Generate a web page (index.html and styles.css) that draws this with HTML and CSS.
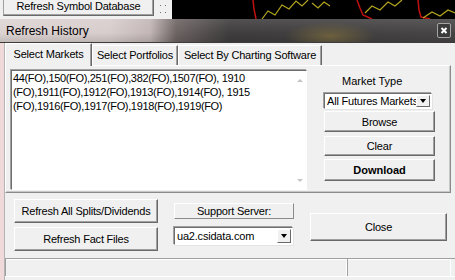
FILE: index.html
```html
<!DOCTYPE html>
<html>
<head>
	<title>Refresh History</title>
	<link rel="stylesheet" href="styles.css">
</head>
<body>
	<div class="top">
		<div class="toolbar">
			<div class="btn sym">Refresh Symbol Database</div>
			<svg class="grip" width="10" height="12" viewBox="0 0 10 12">
				<rect x="1" y="4" width="1" height="1" fill="#6d6d6d"/>
				<rect x="6" y="4" width="1" height="1" fill="#6d6d6d"/>
				<rect x="1" y="11" width="1" height="1" fill="#6d6d6d"/>
				<rect x="6" y="11" width="1" height="1" fill="#6d6d6d"/>
			</svg>
		</div>
		<svg class="chart" width="283" height="19" viewBox="0 0 283 19">
			<rect width="283" height="19" fill="#000"/>
			<polyline points="90,19 96,11 103,15 110,5 117,9 124,1 130,6 136,0" fill="none" stroke="#b3a61e" stroke-width="1.2"/>
			<polyline points="140,3 146,8 152,2 158,6" fill="none" stroke="#b3a61e" stroke-width="1.2"/>
			<polyline points="81,0 82,9 84,19" fill="none" stroke="#c01010" stroke-width="1.5"/>
			<polyline points="185,0 188,8 191,15 200,19" fill="none" stroke="#c01010" stroke-width="1.5"/>
			<polyline points="193,13 200,6 208,10 216,2 223,6 230,0" fill="none" stroke="#b3a61e" stroke-width="1.2"/>
			<polyline points="246,0 247,10 249,17 258,19" fill="none" stroke="#c01010" stroke-width="1.5"/>
			<polyline points="251,18 260,12 268,16 276,10 283,13" fill="none" stroke="#b3a61e" stroke-width="1.2"/>
		</svg>
	</div>
	<div class="win">
		<div class="title">
			<span>Refresh History</span>
			<svg class="x" width="14" height="15" viewBox="0 0 14 15">
				<rect x="0.5" y="0.5" width="13" height="14" rx="1.5" fill="#3b3b3b" stroke="#a5a5a5"/>
				<path d="M4.5 5 L9.5 10 M9.5 5 L4.5 10" stroke="#fff" stroke-width="2"/>
			</svg>
		</div>
		<div class="body">
			<ul class="tabs">
				<li class="on">Select Markets</li>
				<li class="t2">Select Portfolios</li>
				<li class="t3">Select By Charting Software</li>
			</ul>
			<div class="panel">
				<div class="list">
					<div class="txt">44(FO),150(FO),251(FO),382(FO),1507(FO), 1910
(FO),1911(FO),1912(FO),1913(FO),1914(FO), 1915
(FO),1916(FO),1917(FO),1918(FO),1919(FO)</div>
					<div class="sb">
						<i class="up"></i>
						<i class="dn"></i>
					</div>
				</div>
				<div class="side">
					<div class="lbl">Market Type</div>
					<div class="combo mt"><span>All Futures Markets</span><i class="arr"></i></div>
					<div class="btn browse">Browse</div>
					<div class="btn clear">Clear</div>
					<div class="btn dl">Download</div>
				</div>
			</div>
			<div class="bottom">
				<div class="col1">
					<div class="btn big">Refresh All Splits/Dividends</div>
					<div class="btn big">Refresh Fact Files</div>
				</div>
				<div class="col2">
					<div class="btn srv">Support Server:</div>
					<div class="combo ua"><span>ua2.csidata.com</span><i class="arr"></i></div>
				</div>
				<div class="btn close">Close</div>
			</div>
			<div class="status">
				<div class="s1"></div>
				<div class="s2"></div>
			</div>
		</div>
	</div>
</body>
</html>
```

FILE: styles.css
```css
*{
	padding: 0;
	margin: 0;
	box-sizing: border-box;
}
li{
	list-style: none;
}
body{
	width: 455px;
	height: 280px;
	overflow: hidden;
	background: #fff;
	font-family: "Liberation Sans", Arial, sans-serif;
	font-size: 11px;
	letter-spacing: -0.2px;
	color: #000;
}
.top{
	display: flex;
	height: 19px;
}
.toolbar{
	width: 172px;
	display: flex;
	align-items: flex-start;
	padding-left: 3px;
	background: #f0f0f0;
}
.btn{
	display: flex;
	align-items: center;
	justify-content: center;
	background: #f0f0f0;
	border: 1px solid;
	border-color: #fff #696969 #696969 #fff;
	box-shadow: inset -1px -1px 0 #a0a0a0;
	white-space: nowrap;
}
.sym{
	width: 151px;
	height: 16px;
	border-top: none;
	line-height: 12px;
	padding-bottom: 3px;
	border-left-color: #a0a0a0;
}
.grip{
	margin-left: 5px;
	margin-top: 1px;
}
.chart{
	display: block;
}
.title{
	height: 24px;
	display: flex;
	align-items: center;
	justify-content: space-between;
	padding: 0 4px 1px 6px;
	font-size: 12px;
	letter-spacing: 0;
	background:
		radial-gradient(ellipse 45px 14px at 330px 17px, rgba(160,135,60,0.45), rgba(160,135,60,0)),
		linear-gradient(to bottom, rgba(255,255,255,0.10), rgba(255,255,255,0) 60%, rgba(0,0,0,0.12)),
		linear-gradient(to right, #ddd3d3 0, #d8cdcd 110px, #c2b6b6 150px, #6e6464 176px, #3f3d3d 230px, #474545 100%);
	border-bottom: 1px solid #3c3c3c;
}
.title span{
	padding-top: 1px;
}
.x{
	display: block;
}
.body{
	height: 237px;
	background: #f0f0f0;
	border-left: 4px solid #efd9d9;
	box-shadow: inset 1px 0 0 #b4b4b4;
	display: flex;
	flex-direction: column;
}
.tabs{
	display: flex;
	align-items: flex-end;
	height: 22px;
	padding-left: 1px;
}
.tabs li{
	height: 20px;
	line-height: 19px;
	text-align: center;
	border: 1px solid;
	border-color: #fff #696969 transparent #fff;
	border-bottom: none;
	box-shadow: inset -1px 0 0 #a0a0a0;
}
.tabs .on{
	width: 87px;
	height: 23px;
	line-height: 20px;
	margin-bottom: -1px;
	position: relative;
	z-index: 1;
	background: #f0f0f0;
}
.tabs .t2{
	width: 86px;
}
.tabs .t3{
	width: 144px;
}
.panel{
	margin-left: 1px;
	width: 446px;
	height: 128px;
	display: flex;
	align-items: flex-start;
	padding: 4px 0 0 5px;
	border: 1px solid;
	border-color: #fff #8a8a8a #8a8a8a #fff;
	box-shadow: inset -1px -1px 0 #c8c8c8;
}
.list{
	width: 296px;
	height: 120px;
	display: flex;
	background: #fff;
	border: 1px solid;
	border-color: #6e6e6e #fff #fff #6e6e6e;
	box-shadow: -1px -1px 0 #a0a0a0;
}
.txt{
	flex: 1;
	white-space: pre;
	overflow: hidden;
	padding-left: 1px;
	line-height: 14px;
	letter-spacing: -0.35px;
}
.sb{
	width: 13px;
	display: flex;
	flex-direction: column;
	justify-content: space-between;
	align-items: center;
	padding: 8px 0 7px;
}
.sb i{
	width: 0;
	height: 0;
	border-left: 3px solid transparent;
	border-right: 3px solid transparent;
}
.sb .up{
	border-bottom: 3px solid #c4c4c4;
}
.sb .dn{
	border-top: 3px solid #c4c4c4;
}
.side{
	margin-left: 17px;
	width: 111px;
	display: flex;
	flex-direction: column;
	padding-top: 5px;
}
.lbl{
	height: 13px;
	line-height: 13px;
	padding-left: 18px;
	letter-spacing: 0;
}
.combo{
	display: flex;
	align-items: center;
	background: #fff;
	border: 1px solid;
	border-color: #6e6e6e #fff #fff #6e6e6e;
	box-shadow: -1px -1px 0 #a0a0a0, 1px 1px 0 #e3e3e3;
	padding: 1px;
}
.combo span{
	flex: 1;
	overflow: hidden;
	white-space: nowrap;
	padding-left: 1px;
}
.arr{
	width: 14px;
	align-self: stretch;
	display: flex;
	align-items: center;
	justify-content: center;
	background: #f0f0f0;
	border: 1px solid;
	border-color: #fff #696969 #696969 #fff;
}
.arr:after{
	content: "";
	border-left: 3.5px solid transparent;
	border-right: 3.5px solid transparent;
	border-top: 4px solid #000;
}
.mt{
	margin-top: 5px;
	width: 108px;
	height: 16px;
}
.browse{
	margin-top: 2px;
	height: 21px;
}
.clear{
	margin-top: 4px;
	height: 20px;
}
.dl{
	margin-top: 3px;
	height: 22px;
	font-weight: bold;
	letter-spacing: 0;
}
.bottom{
	height: 65px;
	display: flex;
	align-items: flex-start;
	padding-left: 10px;
}
.col1{
	width: 144px;
	padding-top: 6px;
	display: flex;
	flex-direction: column;
	gap: 4px;
}
.big{
	height: 24px;
}
.col2{
	width: 120px;
	margin-left: 16px;
	padding-top: 10px;
	display: flex;
	flex-direction: column;
	gap: 8px;
}
.srv{
	height: 16px;
	border-color: #fff #8a8a8a #8a8a8a #fff;
	box-shadow: none;
}
.ua{
	width: 119px;
	height: 18px;
}
.close{
	margin-left: 16px;
	margin-top: 20px;
	width: 137px;
	height: 28px;
}
.status{
	display: flex;
	height: 19px;
	margin-left: 1px;
	border-top: 1px solid #a0a0a0;
	border-bottom: 1px solid #fff;
}
.status div{
	border-left: 1px solid #a0a0a0;
	border-right: 1px solid #fff;
	box-shadow: inset 0 1px 0 #fff;
}
.s1{
	width: 342px;
}
.s2{
	width: 104px;
}
```
